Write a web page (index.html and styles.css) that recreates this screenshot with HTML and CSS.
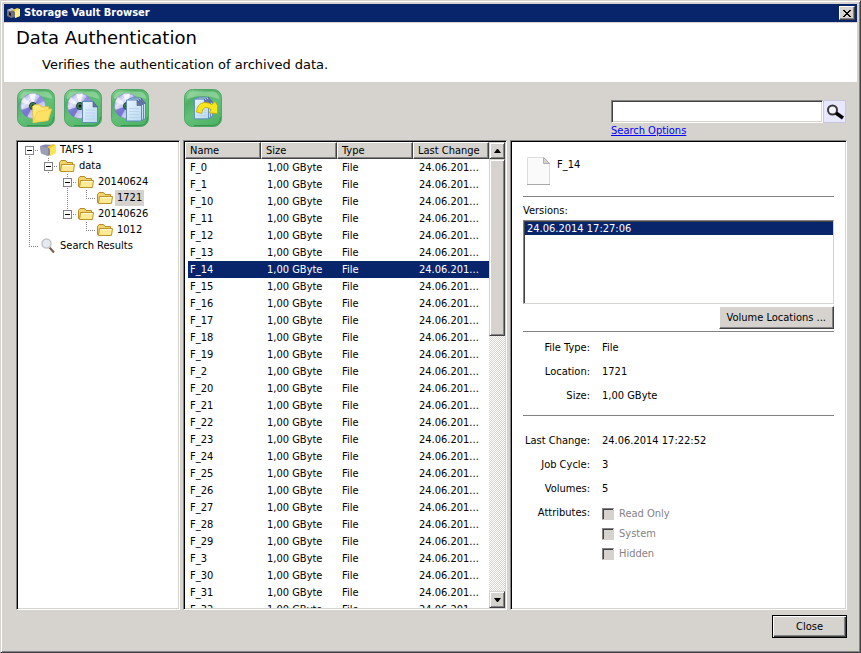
FILE: index.html
```
<!DOCTYPE html>
<html lang="en">
<head>
    <meta charset="UTF-8">
    <meta name="viewport" content="width=device-width, initial-scale=1.0">
    <title>Storage Vault Browser</title>
    <link rel="stylesheet" href="styles.css">
</head>
<body>
    <!-- Shared shapes for the toolbar and the tree -->
    <svg class="defs" width="0" height="0" aria-hidden="true">
        <defs>
            <linearGradient id="green" x1="0" y1="0" x2="0.6" y2="1">
                <stop offset="0" stop-color="#8ed69a"/>
                <stop offset="0.3" stop-color="#4fae66"/>
                <stop offset="0.6" stop-color="#62c078"/>
                <stop offset="1" stop-color="#52b468"/>
            </linearGradient>
            <linearGradient id="disc" x1="0" y1="0" x2="1" y2="1">
                <stop offset="0" stop-color="#8a8ee0"/>
                <stop offset="0.3" stop-color="#e4e4fb"/>
                <stop offset="0.5" stop-color="#b0b0e6"/>
                <stop offset="0.75" stop-color="#dcdcf8"/>
                <stop offset="1" stop-color="#8488d0"/>
            </linearGradient>
            <linearGradient id="yellow" x1="0" y1="0" x2="1" y2="1">
                <stop offset="0" stop-color="#fff38c"/>
                <stop offset="1" stop-color="#f6d048"/>
            </linearGradient>
            <linearGradient id="paper" x1="0" y1="0" x2="1" y2="1">
                <stop offset="0" stop-color="#eaf4fd"/>
                <stop offset="1" stop-color="#b8d8f0"/>
            </linearGradient>
            <symbol id="tile" viewBox="0 0 38 38">
                <rect x="0.5" y="0.5" width="37" height="37" rx="8" fill="url(#green)" stroke="#4ea866"/>
                <path d="M3 10Q3 2.500 10 2.500H28Q35 2.500 35 10Q19 4 3 10Z" fill="#b4e6ba" opacity="0.5"/>
                <path d="M10 36.500H28Q36.500 36.500 36.500 28" fill="none" stroke="#36944e"/>
            </symbol>
            <symbol id="cd" viewBox="0 0 26 26">
                <circle cx="13" cy="13" r="12.5" fill="url(#disc)" stroke="#8488c4" stroke-width="0.6"/>
                <path d="M13 13L1 9A12.500 12.500 0 0 1 4 4Z" fill="#fff" opacity="0.6"/>
                <path d="M13 13L9 1A12.500 12.500 0 0 1 16 0.800Z" fill="#fff" opacity="0.7"/>
                <path d="M13 13L20 2.500A12.500 12.500 0 0 1 24.500 8Z" fill="#7478d4" opacity="0.6"/>
                <path d="M13 13L1 17A12.500 12.500 0 0 0 7 24Z" fill="#5458c4" opacity="0.65"/>
                <circle cx="13" cy="13" r="3.500" fill="#3f8c5a" stroke="#1c3a34"/>
                <circle cx="13" cy="13" r="1.500" fill="#041008"/>
            </symbol>
            <symbol id="sheet" viewBox="0 0 16 22">
                <path d="M0.500 0.500H11L15.500 6V21.500H0.500Z" fill="url(#paper)" stroke="#5f8cbc"/>
                <path d="M11 0.500V6H15.500Z" fill="#6678a8" stroke="#46588c" stroke-width="0.6"/>
                <path d="M3 9H13M3 12H13M3 15H13M3 18H13" stroke="#b4d0ea" stroke-width="0.8"/>
            </symbol>
            <symbol id="folder" viewBox="0 0 16 16">
                <path d="M0.500 12.500V4.500L2 2.500H6.500L8 4.500H13.500V12.500Z" fill="#f3d36c" stroke="#b58a22"/>
                <path d="M1.500 13.500L2.500 6.500H15.500L14.500 13.500Z" fill="#fdea96" stroke="#bd9328"/>
                <path d="M3.500 7.500H14.500" stroke="#fffbd8"/>
            </symbol>
        </defs>
    </svg>

    <div class="window">
        <div class="titlebar">
            <svg width="14" height="14" viewBox="0 0 14 14">
                <path d="M0 4L5 2L8 4V11L4 12L0 10Z" fill="#6f7078"/>
                <path d="M0 4L5 2L8 4L3 5Z" fill="#c9c9cc"/>
                <path d="M2 6L4 7V10L2 9Z" fill="#1c1c20"/>
                <path d="M6 4L10 2L13 3V10L8 12V6Z" fill="#f2d44a"/>
                <path d="M8 5L13 3V10L8 12Z" fill="#fff088"/>
            </svg>
            <span class="title-text">Storage Vault Browser</span>
            <button class="title-close" type="button" aria-label="Close window">
                <svg width="8" height="7" viewBox="0 0 8 7" shape-rendering="crispEdges">
                    <path d="M0 0h2v1h1v1h2v-1h1v-1h2v1h-1v1h-1v1h-1v1h1v1h1v1h1v1h-2v-1h-1v-1h-2v1h-1v1h-2v-1h1v-1h1v-1h1v-1h-1v-1h-1v-1h-1z" fill="#000"/>
                </svg>
            </button>
        </div>

        <div class="header">
            <h1>Data Authentication</h1>
            <p>Verifies the authentication of archived data.</p>
        </div>

        <div class="toolbar">
            <div class="tools">
                <button class="tool" type="button" aria-label="Authenticate folder">
                    <svg width="38" height="38" viewBox="0 0 38 38">
                        <use href="#tile" width="38" height="38"/>
                        <use href="#cd" x="3" y="4" width="26" height="26"/>
                        <path d="M16 33.500L15.500 17L19 15.500L23 16L24.500 18L31.500 17.500L32 20L34.500 20L31 31.500Z" fill="url(#yellow)" stroke="#e0b838" stroke-width="0.8"/>
                        <path d="M16 33.500L20 23L34.500 20L31 31.500Z" fill="#fbe264" stroke="#f0cc48" stroke-width="0.7"/>
                    </svg>
                </button>
                <button class="tool" type="button" aria-label="Authenticate file">
                    <svg width="38" height="38" viewBox="0 0 38 38">
                        <use href="#tile" width="38" height="38"/>
                        <use href="#cd" x="3" y="4" width="26" height="26"/>
                        <use href="#sheet" x="18" y="12" width="16" height="22"/>
                    </svg>
                </button>
                <button class="tool" type="button" aria-label="Authenticate all files">
                    <svg width="38" height="38" viewBox="0 0 38 38">
                        <use href="#tile" width="38" height="38"/>
                        <use href="#cd" x="3" y="4" width="26" height="26"/>
                        <use href="#sheet" x="19" y="8" width="16" height="23"/>
                        <use href="#sheet" x="17" y="9" width="16" height="23"/>
                        <use href="#sheet" x="15" y="10" width="16" height="23"/>
                    </svg>
                </button>
                <button class="tool tool-export" type="button" aria-label="Export">
                    <svg width="38" height="38" viewBox="0 0 38 38">
                        <use href="#tile" width="38" height="38"/>
                        <use href="#sheet" x="14" y="7" width="15" height="22"/>
                        <use href="#sheet" x="12" y="8" width="15" height="22"/>
                        <use href="#sheet" x="10" y="9" width="15" height="22"/>
                        <path d="M12.500 23Q13 14.500 20 13.500Q25 13.500 28 15.500L31 12.500L33.500 16.500V24.500L25.500 24L27 20.500Q24 18 21 18.500Q18.500 19 17.500 24.500Z" fill="#f8e61c" stroke="#bfa70a" stroke-width="0.8"/>
                    </svg>
                </button>
            </div>
            <form class="search">
                <div class="search-row">
                    <input class="search-box" type="text" aria-label="Search">
                    <button class="search-button" type="button" aria-label="Start search">
                        <svg width="18" height="16" viewBox="0 0 18 16">
                            <circle cx="6.500" cy="6" r="4.500" fill="#f4f4ff" stroke="#383838" stroke-width="2"/>
                            <path d="M10 9L17 14" stroke="#000" stroke-width="3.500"/>
                        </svg>
                    </button>
                </div>
                <a class="search-link" href="#">Search Options</a>
            </form>
        </div>

        <div class="panes">
            <div class="pane tree">
                <div class="node">
                    <span class="cell first"><button class="toggle" type="button" aria-label="Collapse TAFS 1"></button></span>
                    <svg class="icon" width="16" height="16" viewBox="0 0 16 16">
                        <path d="M0 4L5 2.500L15 3V11L8 14L1 11Z" fill="#8286b8"/>
                        <path d="M7 5L13 2L15.500 3V11L10 14V7Z" fill="#f0c828"/>
                        <path d="M10 6L15.500 3V11L10 14Z" fill="#ffe650"/>
                        <path d="M0 4L8 6V14L1 11.500Z" fill="#9c9eb4"/>
                    </svg>
                    <span class="label">TAFS 1</span>
                </div>
                <div class="node">
                    <span class="cell line"></span><span class="cell"><button class="toggle" type="button" aria-label="Collapse data"></button></span>
                    <svg class="icon" width="16" height="16"><use href="#folder"/></svg>
                    <span class="label">data</span>
                </div>
                <div class="node">
                    <span class="cell line"></span><span class="cell"></span><span class="cell"><button class="toggle" type="button" aria-label="Collapse 20140624"></button></span>
                    <svg class="icon" width="16" height="16"><use href="#folder"/></svg>
                    <span class="label">20140624</span>
                </div>
                <div class="node">
                    <span class="cell line"></span><span class="cell"></span><span class="cell line"></span><span class="cell elbow"></span>
                    <svg class="icon" width="16" height="16"><use href="#folder"/></svg>
                    <span class="label selected">1721</span>
                </div>
                <div class="node">
                    <span class="cell line"></span><span class="cell"></span><span class="cell last"><button class="toggle" type="button" aria-label="Collapse 20140626"></button></span>
                    <svg class="icon" width="16" height="16"><use href="#folder"/></svg>
                    <span class="label">20140626</span>
                </div>
                <div class="node">
                    <span class="cell line"></span><span class="cell"></span><span class="cell"></span><span class="cell elbow"></span>
                    <svg class="icon" width="16" height="16"><use href="#folder"/></svg>
                    <span class="label">1012</span>
                </div>
                <div class="node">
                    <span class="cell elbow"></span>
                    <svg class="icon" width="16" height="16" viewBox="0 0 16 16">
                        <path d="M9.500 9.500L14 14.500" stroke="#7a5a48" stroke-width="2"/>
                        <circle cx="6.500" cy="5.500" r="4.500" fill="#e6ebf2" stroke="#c2c4c8" stroke-width="1.500"/>
                    </svg>
                    <span class="label">Search Results</span>
                </div>
            </div>

            <div class="pane list">
                <div class="list-body">
                    <table>
                        <thead>
                            <tr><th>Name</th><th>Size</th><th>Type</th><th>Last Change</th></tr>
                        </thead>
                        <tbody id="files">
                            <!-- Rows are added by the script below -->
                        </tbody>
                    </table>
                </div>
                <div class="scrollbar">
                    <button class="scroll-button" type="button" aria-label="Scroll up">
                        <svg width="7" height="4" viewBox="0 0 7 4"><path d="M3 0H4L7 4H0Z" fill="#000"/></svg>
                    </button>
                    <div class="scroll-track"><div class="scroll-thumb"></div></div>
                    <button class="scroll-button" type="button" aria-label="Scroll down">
                        <svg width="7" height="4" viewBox="0 0 7 4"><path d="M0 0H7L4 4H3Z" fill="#000"/></svg>
                    </button>
                </div>
            </div>

            <div class="pane details">
                <div class="file">
                    <svg width="23" height="28" viewBox="0 0 23 28">
                        <path d="M0.500 0.500H17L22.500 6V27.500H0.500Z" fill="#fafafa" stroke="#dcdcdc"/>
                        <path d="M0 27.500H23" stroke="#a8a8a8"/>
                        <path d="M16.500 0.500V6.500H22.500Z" fill="#d4d4d4" stroke="#b0b0b0"/>
                    </svg>
                    <span>F_14</span>
                </div>
                <div class="section versions">
                    <label for="versions">Versions:</label>
                    <select id="versions" size="5">
                        <option selected>24.06.2014 17:27:06</option>
                    </select>
                    <button class="button volume" type="button">Volume Locations ...</button>
                </div>
                <dl class="section props">
                    <dt>File Type:</dt><dd>File</dd>
                    <dt>Location:</dt><dd>1721</dd>
                    <dt>Size:</dt><dd>1,00 GByte</dd>
                </dl>
                <dl class="section props more">
                    <dt>Last Change:</dt><dd>24.06.2014 17:22:52</dd>
                    <dt>Job Cycle:</dt><dd>3</dd>
                    <dt>Volumes:</dt><dd>5</dd>
                    <dt>Attributes:</dt>
                    <dd class="checks">
                        <label><input type="checkbox" disabled>Read Only</label>
                        <label><input type="checkbox" disabled>System</label>
                        <label><input type="checkbox" disabled>Hidden</label>
                    </dd>
                </dl>
            </div>
        </div>

        <div class="footer">
            <button class="button close" type="button">Close</button>
        </div>
    </div>

    <script>
        const names = ['0', '1', '10', '11', '12', '13', '14', '15', '16', '17', '18', '19', '2', '20',
            '21', '22', '23', '24', '25', '26', '27', '28', '29', '3', '30', '31', '32'];
        const files = document.getElementById('files');

        names.forEach(name => {
            const row = document.createElement('tr');
            if (name === '14') row.className = 'selected';
            ['F_' + name, '1,00 GByte', 'File', '24.06.201...'].forEach(text => {
                const cell = document.createElement('td');
                cell.textContent = text;
                row.appendChild(cell);
            });
            files.appendChild(row);
        });
    </script>
</body>
</html>
```
FILE: styles.css
```
* {
    box-sizing: border-box;
}
body {
    margin: 0;
    font-family: Tahoma, "DejaVu Sans Condensed", "DejaVu Sans", sans-serif;
    font-size: 11px;
    line-height: 16px;
    color: #000;
    background-color: #d6d3ce;
}
button, input, select {
    font: inherit;
    color: inherit;
    border-radius: 0;
    margin: 0;
    padding: 0;
}
svg {
    display: block;
    flex: none;
}
.defs {
    position: absolute;
}
.window {
    height: 100vh;
    display: flex;
    flex-direction: column;
    padding: 3px;
    border: 1px solid;
    border-color: #d6d3ce #424142 #424142 #d6d3ce;
    box-shadow: inset 1px 1px #fff, inset -1px -1px #848284;
}
.titlebar {
    flex: none;
    height: 18px;
    display: flex;
    align-items: center;
    padding: 0 2px 0 3px;
    background-color: #08246b;
    color: #fff;
    font-weight: bold;
}
.title-text {
    flex: 1;
    margin-left: 3px;
}
.title-close {
    width: 16px;
    height: 14px;
    display: flex;
    align-items: center;
    justify-content: center;
    background-color: #d6d3ce;
    border: 1px solid;
    border-color: #fff #424142 #424142 #fff;
    box-shadow: inset -1px -1px #848284;
}
.header {
    flex: none;
    height: 59px;
    margin-top: 1px;
    padding: 2px 12px;
    background-color: #fff;
    font-family: Verdana, "DejaVu Sans", sans-serif;
}
.header h1 {
    margin: 0;
    font-size: 18px;
    font-weight: normal;
    line-height: 26px;
}
.header p {
    margin: 5px 0 0 26px;
    font-size: 13px;
    line-height: 18px;
}
.toolbar {
    flex: none;
    display: flex;
    justify-content: space-between;
    align-items: flex-start;
    height: 58px;
    padding: 7px 11px 0 13px;
}
.tools {
    display: flex;
    gap: 9px;
}
.tool {
    background: none;
    border: none;
}
.tool-export {
    margin-left: 26px;
}
.search {
    width: 235px;
    padding-top: 11px;
}
.search-row {
    display: flex;
}
.search-box {
    flex: 1;
    min-width: 0;
    height: 23px;
    padding: 0 3px;
    background-color: #fff;
    border: 1px solid;
    border-color: #848284 #fff #fff #848284;
    box-shadow: inset 1px 1px #424142, inset -1px -1px #d6d3ce;
}
.search-button {
    width: 23px;
    height: 23px;
    display: flex;
    align-items: center;
    justify-content: center;
    background-color: #e7e7ff;
    border: 1px solid #c6c6de;
}
.search-link {
    color: #0000ff;
}
.panes {
    flex: 1;
    min-height: 0;
    display: flex;
    gap: 3px;
    padding: 0 10px 0 12px;
}
.pane {
    background-color: #fff;
    border: 1px solid;
    border-color: #848284 #fff #fff #848284;
    box-shadow: inset 1px 1px #000, inset -1px -1px #d6d3ce;
    padding: 1px;
    overflow: hidden;
}

/* Tree */
.tree {
    width: 164px;
    padding-left: 2px;
}
.node {
    display: flex;
    height: 16px;
    white-space: nowrap;
}
.cell {
    flex: none;
    display: flex;
    align-items: center;
    width: 19px;
    padding-left: 6px;
    background-repeat: no-repeat;
}
.cell:has(.toggle), .elbow {
    background-image:
        repeating-linear-gradient(#848284 0 1px, transparent 1px 2px),
        repeating-linear-gradient(90deg, #848284 0 1px, transparent 1px 2px);
    background-size: 1px 100%, 9px 1px;
    background-position: 10px 0, 10px 8px;
}
.cell.first {
    background-size: 1px 8px, 9px 1px;
    background-position: 10px 8px, 10px 8px;
}
.cell.elbow, .cell.last {
    background-size: 1px 8px, 9px 1px;
}
.line {
    background-image: repeating-linear-gradient(#848284 0 1px, transparent 1px 2px);
    background-size: 1px 100%;
    background-position: 10px 0;
}
.toggle {
    width: 9px;
    height: 9px;
    border: 1px solid #848284;
    background: linear-gradient(#000, #000) center / 5px 1px no-repeat #fff;
}
.icon {
    margin-left: 2px;
}
.label {
    margin-left: 2px;
    padding: 0 2px;
}
.label.selected {
    background-color: #d6d3ce;
}

/* File list */
.list {
    width: 324px;
    display: flex;
}
.list-body {
    flex: 1;
    overflow: hidden;
}
table {
    width: 100%;
    table-layout: fixed;
    border-collapse: separate;
    border-spacing: 0;
}
th {
    height: 17px;
    padding: 0 4px;
    font-weight: normal;
    line-height: 15px;
    text-align: left;
    white-space: nowrap;
    background-color: #d6d3ce;
    border: 1px solid;
    border-color: #fff #424142 #424142 #fff;
    box-shadow: inset -1px -1px #848284;
}
td {
    height: 17px;
    padding: 0 0 0 6px;
    line-height: 17px;
    white-space: nowrap;
}
td:first-child {
    padding-left: 2px;
    border-left: 3px solid #fff;
}
td:nth-child(3) {
    padding-left: 5px;
}
tr.selected td {
    color: #fff;
    background-color: #08246b;
}
.scrollbar {
    flex: none;
    width: 16px;
    display: flex;
    flex-direction: column;
}
.scroll-button, .scroll-thumb {
    background-color: #d6d3ce;
    border: 1px solid;
    border-color: #d6d3ce #424142 #424142 #d6d3ce;
    box-shadow: inset 1px 1px #fff, inset -1px -1px #848284;
}
.scroll-button {
    flex: none;
    height: 17px;
    display: flex;
    align-items: center;
    justify-content: center;
}
.scroll-track {
    flex: 1;
    background: repeating-conic-gradient(#d6d3ce 0 25%, #fff 0 50%) 0 0 / 2px 2px;
}
.scroll-thumb {
    height: 41%;
}

/* Details */
.details {
    flex: 1;
    padding: 1px 12px;
}
.file {
    display: flex;
    gap: 7px;
    height: 54px;
    padding: 15px 4px 0;
}
.section {
    margin: 0;
    border-top: 1px solid #848284;
}
.versions {
    display: flex;
    flex-direction: column;
    height: 135px;
    padding-top: 6px;
}
select {
    height: 84px;
    margin-top: 1px;
    padding: 1px 0 1px 1px;
    overflow: hidden;
    background-color: #fff;
    border: 1px solid;
    border-color: #848284 #d6d3ce #d6d3ce #848284;
    box-shadow: inset 1px 1px #424142;
    outline: none;
}
option {
    min-height: 13px;
    padding: 0 2px;
    line-height: 13px;
}
option:checked {
    color: #fff;
    background: linear-gradient(#08246b, #08246b);
}
.button {
    background-color: #d6d3ce;
    border: 1px solid;
    border-color: #fff #424142 #424142 #fff;
    box-shadow: inset -1px -1px #848284;
}
.volume {
    align-self: flex-end;
    height: 23px;
    margin-top: 2px;
    padding: 0 7px;
}
.props {
    display: grid;
    grid-template-columns: 67px 1fr;
    column-gap: 12px;
    padding: 4px 0 7px;
    line-height: 24px;
    white-space: nowrap;
}
.props dt {
    display: flex;
    justify-content: flex-end;
}
.props dd {
    margin: 0;
}
.more {
    padding-top: 13px;
}
.checks {
    padding-top: 3px;
}
.checks label {
    display: flex;
    align-items: center;
    gap: 5px;
    height: 20px;
    color: #848284;
}
.checks input {
    appearance: none;
    width: 12px;
    height: 12px;
    background-color: #d6d3ce;
    border: 1px solid;
    border-color: #848284 #d6d3ce #d6d3ce #848284;
    box-shadow: inset 1px 1px #424142;
}
.footer {
    flex: none;
    display: flex;
    justify-content: flex-end;
    padding: 5px 10px 11px;
}
.close {
    width: 75px;
    height: 23px;
    border-color: #000;
    box-shadow: inset 1px 1px #fff, inset -1px -1px #424142, inset -2px -2px #848284;
}
```
